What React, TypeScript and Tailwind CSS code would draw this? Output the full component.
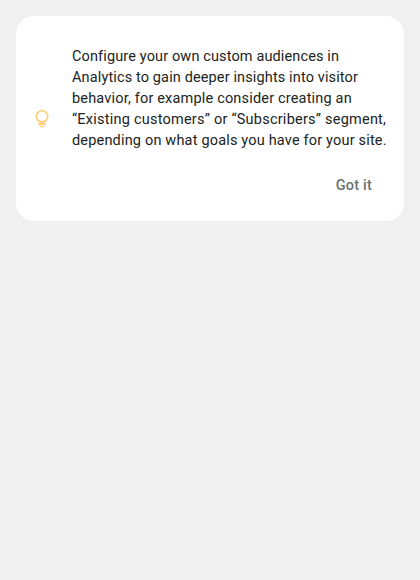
import React from "react";

const lines = [
  { text: "Configure your own custom audiences in", tracking: "tracking-[0.13px]" },
  { text: "Analytics to gain deeper insights into visitor", tracking: "tracking-[0.13px]" },
  { text: "behavior, for example consider creating an", tracking: "tracking-[0.18px]" },
  { text: "“Existing customers” or “Subscribers” segment,", tracking: "tracking-[0.23px]" },
  { text: "depending on what goals you have for your site.", tracking: "tracking-[0.18px]" },
];

function BulbIcon() {
  return (
    <svg width="20" height="21" viewBox="0 0 20 21" fill="none" stroke="#fdcb74">
      <circle cx="10" cy="8.4" r="5.7" strokeWidth="1.6" />
      <path d="M6 16h8" strokeWidth="1.7" />
      <path d="M8 18.5h4" strokeWidth="1.5" />
    </svg>
  );
}

export default function App() {
  return (
    <main className="min-h-screen bg-[#f0f0f0] p-4 font-['Roboto','Liberation_Sans',sans-serif]">
      <section className="flex h-[205px] items-center rounded-[18px] bg-white pl-4">
        <div className="mr-5 h-[21px] w-5 shrink-0">
          <BulbIcon />
        </div>
        <div className="flex h-full flex-1 flex-col pt-[30px]">
          <p className="text-[14.5px] leading-[21px] whitespace-nowrap text-[#202422]">
            {lines.map((line) => (
              <span key={line.text} className={`block w-fit ${line.tracking}`}>
                {line.text}
              </span>
            ))}
          </p>
          <div className="flex justify-end pt-6 pr-8">
            <button className="text-[14.5px] leading-[21px] font-medium tracking-[0.2px] text-[#6b7270]">
              Got it
            </button>
          </div>
        </div>
      </section>
    </main>
  );
}
